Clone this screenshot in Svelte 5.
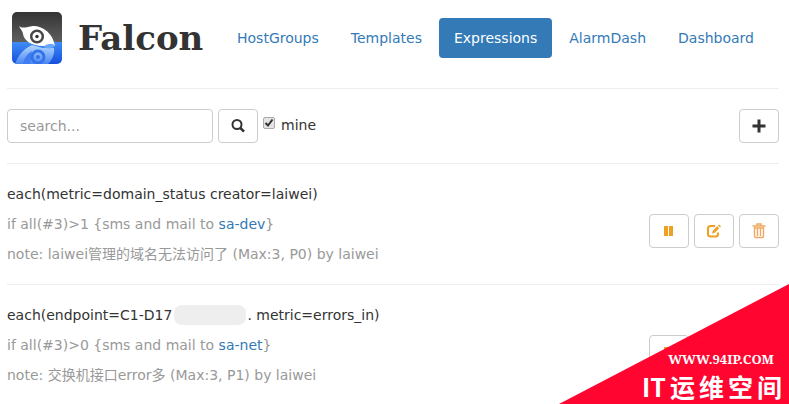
<script lang="ts">
  interface Expression {
    id: number;
    before: string;
    hidden: boolean;
    after: string;
    condition: string;
    team: string;
    note: string;
  }

  const navItems = [
    "HostGroups",
    "Templates",
    "Expressions",
    "AlarmDash",
    "Dashboard",
  ];

  const expressions: Expression[] = [
    {
      id: 1,
      before: "each(metric=domain_status creator=laiwei)",
      hidden: false,
      after: "",
      condition: "if all(#3)>1",
      team: "sa-dev",
      note: "laiwei管理的域名无法访问了 (Max:3, P0) by laiwei",
    },
    {
      id: 2,
      before: "each(endpoint=C1-D17",
      hidden: true,
      after: ". metric=errors_in)",
      condition: "if all(#3)>0",
      team: "sa-net",
      note: "交换机接口error多 (Max:3, P1) by laiwei",
    },
  ];

  let active = $state("Expressions");
  let query = $state("");
  let mine = $state(true);
</script>

<div class="page">
  <header class="header">
    <a class="brand" href="#home">
      <svg class="logo" viewBox="0 0 50 52" aria-hidden="true">
        <defs>
          <linearGradient id="sky" x1="0" y1="0" x2="0" y2="1">
            <stop offset="0" stop-color="#343434" />
            <stop offset="1" stop-color="#606060" />
          </linearGradient>
          <linearGradient id="sea" x1="0" y1="0" x2="0" y2="1">
            <stop offset="0" stop-color="#3f8cf6" />
            <stop offset="1" stop-color="#1550dc" />
          </linearGradient>
          <linearGradient id="reflection" x1="0" y1="0" x2="0" y2="1">
            <stop offset="0" stop-color="#b4d6ff" />
            <stop offset="1" stop-color="#4a86f2" />
          </linearGradient>
          <clipPath id="tile"><rect width="50" height="52" rx="5" /></clipPath>
        </defs>
        <g clip-path="url(#tile)">
          <rect width="50" height="31" fill="url(#sky)" />
          <rect y="30" width="50" height="22" fill="url(#sea)" />
          <path
            d="M3 52C6 44 11 37 20 33L31 36L42 36C43 42 40 48 36 52Z"
            fill="url(#reflection)"
          />
          <path d="M11 52C12 46 15 42 20 39L18 52Z" fill="#3f7df0" />
          <circle cx="26" cy="45" r="6" fill="none" stroke="#3474ea" stroke-width="3" />
          <circle cx="26" cy="45" r="2" fill="#3474ea" />
          <path
            d="M7 14C10 17 15 15 21 14C32 14 41 22 43 34C39 31 36 34 31 34C20 34 12 29 11 22C11 19 8 17 7 14Z"
            fill="#fff"
          />
          <path d="M31 35C36 31 41 31 43 34C40 37 36 37 31 35Z" fill="#67a6fb" />
          <circle cx="25" cy="24.500" r="5.800" fill="#fff" stroke="#484848" stroke-width="2.500" />
          <circle cx="25" cy="24.500" r="1.700" fill="#333" />
        </g>
      </svg>
      <span class="brand-name">Falcon</span>
    </a>
    <nav class="nav">
      {#each navItems as item}
        <a
          class="nav-link"
          class:active={active === item}
          href="#{item.toLowerCase()}"
          onclick={() => (active = item)}>{item}</a
        >
      {/each}
    </nav>
  </header>

  <form class="toolbar" onsubmit={(e) => e.preventDefault()}>
    <input
      class="search"
      type="text"
      placeholder="search..."
      aria-label="search"
      bind:value={query}
    />
    <button class="btn dark" type="submit" aria-label="Search">
      <svg class="icon" viewBox="0 0 14 14">
        <circle cx="6" cy="5.500" r="4.500" fill="none" stroke="currentColor" stroke-width="2" />
        <path d="M9 8.700L13 12.700" stroke="currentColor" stroke-width="2.600" />
      </svg>
    </button>
    <label class="mine">
      <input class="check" type="checkbox" bind:checked={mine} />
      <span>mine</span>
    </label>
    <button class="btn dark add" type="button" aria-label="Add expression">
      <svg class="icon" viewBox="0 0 14 14">
        <path d="M5.500 .5h3v5h5v3h-5v5h-3v-5h-5v-3h5z" fill="currentColor" />
      </svg>
    </button>
  </form>

  <ul class="list">
    {#each expressions as item (item.id)}
      <li class="row">
        <div class="info">
          <div class="title">
            {item.before}{#if item.hidden}<span class="redacted"></span>{/if}{item.after}
          </div>
          <div>
            {item.condition} &#123;sms and mail to <a href="#{item.team}">{item.team}</a>&#125;
          </div>
          <div>note: {item.note}</div>
        </div>
        <div class="actions">
          <button class="btn" type="button" aria-label="Pause">
            <svg class="icon" viewBox="0 0 14 14">
              <path d="M2 2h4v10H2zM7 2h4v10H7z" fill="currentColor" />
            </svg>
          </button>
          <button class="btn" type="button" aria-label="Edit">
            <svg class="icon" viewBox="0 0 14 14">
              <path
                d="M8 2H3.500Q1 2 1 4.500V10Q1 12.500 3.500 12.500H8.500Q11 12.500 11 10V8.500"
                fill="none"
                stroke="currentColor"
                stroke-width="2"
              />
              <path d="M5 9.500L5.800 6.700L10.200 2.300L12.200 4.300L7.800 8.700ZM11 1.500L12 .5L14 2.500L13 3.500Z" fill="currentColor" />
            </svg>
          </button>
          <button class="btn" type="button" aria-label="Delete">
            <svg class="icon trash" viewBox="0 0 14 16">
              <path
                d="M.5 3H13.500M5 3V1H9V3M2.500 4V13Q2.500 14.500 4 14.500H10Q11.500 14.500 11.500 13V4M5.500 5V13M8.500 5V13M2.500 5H11.500"
                fill="none"
                stroke="currentColor"
                stroke-width="1.400"
              />
            </svg>
          </button>
        </div>
      </li>
    {/each}
  </ul>
</div>

<aside class="corner">
  <span class="corner-url">WWW.94IP.COM</span>
  <span class="corner-name"><span>IT</span><span>运</span><span>维</span><span>空</span><span>间</span></span>
</aside>

<style>
  :global(body) {
    margin: 0;
    background: #fff;
  }

  .page {
    padding: 0 10px 0 7px;
    font-family: "DejaVu Sans", "Noto Sans CJK SC", sans-serif;
    font-size: 14px;
    line-height: 20px;
    color: #333;
  }

  a {
    color: #337ab7;
    text-decoration: none;
  }

  /* Header */
  .header {
    display: flex;
    align-items: center;
    height: 76px;
    padding-bottom: 12px;
    border-bottom: 1px solid #eee;
  }

  .brand {
    display: flex;
    align-items: center;
    gap: 16px;
    width: 200px;
    padding-left: 5px;
    margin-right: 10px;
    color: #333;
  }

  .logo {
    width: 50px;
    height: 52px;
  }

  .brand-name {
    font-family: "DejaVu Serif", serif;
    font-size: 34px;
    font-weight: bold;
    line-height: 40px;
  }

  .nav {
    display: flex;
    gap: 2px;
  }

  .nav-link {
    padding: 10px 15px;
    border-radius: 4px;
  }

  .nav-link.active {
    background: #337ab7;
    color: #fff;
  }

  /* Search */
  .toolbar {
    display: flex;
    align-items: center;
    gap: 5px;
    padding: 20px 0;
    border-bottom: 1px solid #eee;
  }

  .search {
    box-sizing: border-box;
    width: 206px;
    height: 34px;
    padding: 6px 12px;
    border: 1px solid #ccc;
    border-radius: 4px;
    font: inherit;
    color: #555;
  }

  .search::placeholder {
    color: #999;
  }

  .btn {
    display: flex;
    align-items: center;
    justify-content: center;
    box-sizing: border-box;
    width: 40px;
    height: 34px;
    padding: 0;
    border: 1px solid #ccc;
    border-radius: 4px;
    background: #fff;
    color: #f0a020;
    cursor: pointer;
  }

  .btn.dark {
    color: #333;
  }

  .icon {
    width: 14px;
    height: 14px;
  }

  .trash {
    height: 16px;
    color: #f0a860;
  }

  .mine {
    display: flex;
    align-items: center;
    gap: 6px;
    padding-bottom: 2px;
  }

  .check {
    appearance: none;
    box-sizing: border-box;
    width: 12px;
    height: 12px;
    margin: 0 0 4px;
    border: 1px solid #aaa;
    border-radius: 2px;
    background: #e4e4e4;
  }

  .check:checked {
    background: #e4e4e4 url("data:image/svg+xml,%3Csvg xmlns='http://www.w3.org/2000/svg' viewBox='0 0 10 10'%3E%3Cpath d='M1.500 5L4 7.500L8.500 1.500' fill='none' stroke='%23333' stroke-width='2'/%3E%3C/svg%3E") center / 10px no-repeat;
  }

  .add {
    margin-left: auto;
  }

  /* Expressions */
  .list {
    margin: 0;
    padding: 0;
    list-style: none;
  }

  .row {
    display: flex;
    align-items: flex-start;
    justify-content: space-between;
    padding: 15px 0;
    border-bottom: 1px solid #eee;
  }

  .row:last-child {
    padding-bottom: 10px;
    border-bottom: none;
  }

  .info {
    line-height: 30px;
    color: #999;
  }

  .title {
    color: #333;
  }

  .redacted {
    display: inline-block;
    width: 72px;
    height: 20px;
    margin: 0 1px 3px 2px;
    border-radius: 8px;
    background: #eee;
    vertical-align: middle;
  }

  .actions {
    display: flex;
    gap: 5px;
    padding-top: 35px;
  }

  /* Site badge over the page corner */
  .corner {
    position: fixed;
    right: 0;
    bottom: 0;
    display: flex;
    flex-direction: column;
    align-items: flex-end;
    justify-content: flex-end;
    box-sizing: border-box;
    width: 230px;
    height: 120px;
    padding-right: 7px;
    background: #ff0530;
    clip-path: polygon(100% 0, 100% 100%, 0 100%);
    color: #fff;
    font-weight: bold;
  }

  .corner-url {
    margin-right: 8px;
    font-family: "Noto Serif", "DejaVu Serif", serif;
    font-size: 13px;
    line-height: 18px;
  }

  .corner-name {
    display: flex;
    gap: 4px;
    font-family: "Noto Sans CJK SC", sans-serif;
    font-size: 25px;
    line-height: 36px;
  }
</style>
